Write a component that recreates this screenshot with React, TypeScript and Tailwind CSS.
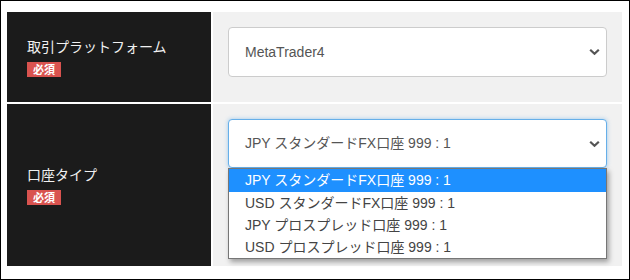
import React from "react";

const jp = { fontFamily: '"Noto Sans CJK JP", "Noto Sans", sans-serif' };
const sel = { fontFamily: '"Liberation Sans", Arial, "Noto Sans CJK JP", sans-serif' };

function Chevron() {
  return (
    <svg width="11" height="7" viewBox="0 0 11 7" className="absolute right-[6px] top-1/2 -translate-y-1/2">
      <path d="M1.2 1.2 L5.5 5.3 L9.8 1.2" fill="none" stroke="#555" strokeWidth="2.2" />
    </svg>
  );
}

function Badge() {
  return (
    <span className="mt-[7px] flex h-[15px] w-[34px] items-center justify-center bg-[#d9534f] text-[11px] font-bold leading-none text-white" style={jp}>
      必須
    </span>
  );
}

const options = [
  "JPY スタンダードFX口座 999 : 1",
  "USD スタンダードFX口座 999 : 1",
  "JPY プロスプレッド口座 999 : 1",
  "USD プロスプレッド口座 999 : 1",
];

export default function App() {
  return (
    <div className="box-border h-[280px] w-[630px] border border-black bg-white pl-[6px] pr-[6px] pt-[11px]">
      <div className="grid grid-cols-[204px_409px] grid-rows-[90px_162px] gap-[2px]">
        <div className="flex flex-col justify-center bg-[#1b1b1b] pl-[20px]">
          <div className="text-[14px] leading-[17px] text-[#f0f0f0]" style={jp}>取引プラットフォーム</div>
          <Badge />
        </div>
        <div className="bg-[#f1f1f1] px-[15px] pt-[15px]">
          <div className="relative flex h-[50px] items-center rounded-[4px] border border-[#cccccc] bg-white pl-[16px] text-[14px] text-[#555]" style={sel}>
            MetaTrader4
            <Chevron />
          </div>
        </div>
        <div className="flex flex-col justify-center bg-[#1b1b1b] pl-[20px]">
          <div className="text-[14px] leading-[17px] text-[#f0f0f0]" style={jp}>口座タイプ</div>
          <Badge />
        </div>
        <div className="relative bg-[#f1f1f1] px-[15px] pt-[15px]">
          <div className="relative flex h-[49px] items-center rounded-[4px] border border-[#66afe9] bg-white pl-[16px] text-[14px] text-[#555] shadow-[0_0_4px_rgba(102,175,233,0.6)]" style={sel}>
            JPY スタンダードFX口座 999 : 1
            <Chevron />
          </div>
          <div className="absolute left-[15px] right-[15px] top-[64px] z-10 border border-[#767676] bg-white shadow-[2px_3px_5px_rgba(0,0,0,0.35)]" style={sel}>
            {options.map((o, i) => (
              <div
                key={o}
                className={
                  i === 0
                    ? "flex h-[23px] items-center bg-[#1e90ff] pl-[16px] text-[14px] text-white"
                    : "flex h-[22px] items-center pl-[16px] text-[14px] text-[#444]"
                }
              >
                {o}
              </div>
            ))}
          </div>
        </div>
      </div>
    </div>
  );
}
